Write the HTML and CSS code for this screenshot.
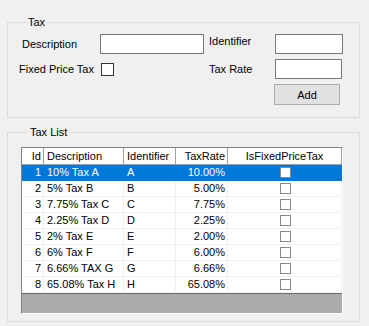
FILE: index.html
```html
<!DOCTYPE html>
<html lang="en">
<head>
  <meta charset="UTF-8" />
  <title>Tax</title>
  <link rel="stylesheet" href="styles.css">
</head>
<body>
  <fieldset class="group group-tax">
    <legend>Tax</legend>
    <div class="fields">
      <label class="lbl lbl-desc">Description</label>
      <input class="txt txt-desc" type="text" />
      <label class="lbl lbl-ident">Identifier</label>
      <input class="txt txt-ident" type="text" />
      <label class="lbl">Fixed Price Tax</label>
      <div><input class="check" type="checkbox" /></div>
      <label class="lbl">Tax Rate</label>
      <input class="txt txt-rate" type="text" />
      <button class="btn">Add</button>
    </div>
  </fieldset>
  <fieldset class="group group-list">
    <legend>Tax List</legend>
    <div class="grid">
      <div class="row head">
        <div class="cell num">Id</div>
        <div class="cell">Description</div>
        <div class="cell">Identifier</div>
        <div class="cell num">TaxRate</div>
        <div class="cell mid">IsFixedPriceTax</div>
      </div>
      <div class="row selected">
        <div class="cell num">1</div><div class="cell">10% Tax A</div><div class="cell">A</div><div class="cell num">10.00%</div><div class="cell mid"><span class="box"></span></div>
      </div>
      <div class="row">
        <div class="cell num">2</div><div class="cell">5% Tax B</div><div class="cell">B</div><div class="cell num">5.00%</div><div class="cell mid"><span class="box"></span></div>
      </div>
      <div class="row">
        <div class="cell num">3</div><div class="cell">7.75% Tax C</div><div class="cell">C</div><div class="cell num">7.75%</div><div class="cell mid"><span class="box"></span></div>
      </div>
      <div class="row">
        <div class="cell num">4</div><div class="cell">2.25% Tax D</div><div class="cell">D</div><div class="cell num">2.25%</div><div class="cell mid"><span class="box"></span></div>
      </div>
      <div class="row">
        <div class="cell num">5</div><div class="cell">2% Tax E</div><div class="cell">E</div><div class="cell num">2.00%</div><div class="cell mid"><span class="box"></span></div>
      </div>
      <div class="row">
        <div class="cell num">6</div><div class="cell">6% Tax F</div><div class="cell">F</div><div class="cell num">6.00%</div><div class="cell mid"><span class="box"></span></div>
      </div>
      <div class="row">
        <div class="cell num">7</div><div class="cell">6.66% TAX G</div><div class="cell">G</div><div class="cell num">6.66%</div><div class="cell mid"><span class="box"></span></div>
      </div>
      <div class="row">
        <div class="cell num">8</div><div class="cell">65.08% Tax H</div><div class="cell">H</div><div class="cell num">65.08%</div><div class="cell mid"><span class="box"></span></div>
      </div>
      <div class="filler"></div>
    </div>
  </fieldset>
</body>
</html>
```

FILE: styles.css
```css
body { margin: 0; background: #f0f0f0; color: #000; font-family: "Liberation Sans", Arial, sans-serif; font-size: 11px; }
/* Group boxes */
.group { margin: 0 0 0 7px; width: 353px; box-sizing: border-box; border: 1px solid #dcdcdc; padding: 5px 0 12px 11px; }
.group legend { margin-left: 7px; padding: 0 2px; line-height: 13px; }
.group-tax { margin-top: 16px; }
.group-list { margin-top: 8px; padding: 8px 0 7px 13px; }
/* Tax entry fields */
.fields { display: grid; grid-template-columns: 81px 109px 66px 68px; grid-template-rows: 20px 20px 21px; row-gap: 5px; align-items: center; }
.lbl { white-space: nowrap; }
.lbl-desc { margin-left: 3px; }
.lbl-ident { align-self: start; margin-top: 1px; }
.txt { box-sizing: border-box; height: 20px; margin: 0; padding: 0 2px; border: 1px solid #7a7a7a; background: #fff; font: inherit; }
.txt-desc { width: 104px; }
.txt-ident { width: 68px; }
.txt-rate { width: 67px; }
.check { appearance: none; display: block; width: 13px; height: 13px; margin: 1px 0 0 1px; border: 1px solid #333; background: #fff; box-sizing: border-box; }
.btn { grid-column: 4; box-sizing: border-box; width: 66px; height: 21px; margin: 0 0 0 -1px; border: 1px solid #adadad; background: #e1e1e1; font: inherit; color: #000; padding: 0; }
/* Data grid */
.grid { width: 322px; height: 167px; box-sizing: border-box; border: 1px solid; border-color: #828282 #fff #fff #828282; background: #ababab; display: flex; flex-direction: column; }
.row { display: grid; grid-template-columns: 22px 80px 52px 52px 114px; height: 16px; background: #fff; }
.row .cell { box-sizing: border-box; border-right: 1px solid #f0f0f0; border-bottom: 1px solid #f0f0f0; padding: 0 2px 0 3px; line-height: 15px; white-space: nowrap; overflow: hidden; }
.row.head { height: 17px; background: #fff; }
.row.head .cell { border-right-color: #a0a0a0; border-bottom-color: #a0a0a0; line-height: 16px; }
.row.selected { background: #0078d7; color: #fff; }
.row.selected .cell { border-color: #0078d7; }
.cell.num { text-align: right; padding: 0 2px 0 0; }
.cell.mid { text-align: center; padding: 0; display: flex; justify-content: center; align-items: center; }
.box { display: block; width: 11px; height: 11px; box-sizing: border-box; border: 1px solid #888; background: #fff; margin-left: 1px; }
.filler { flex: 1; border-top: 1px solid #6d6d6d; }
```
